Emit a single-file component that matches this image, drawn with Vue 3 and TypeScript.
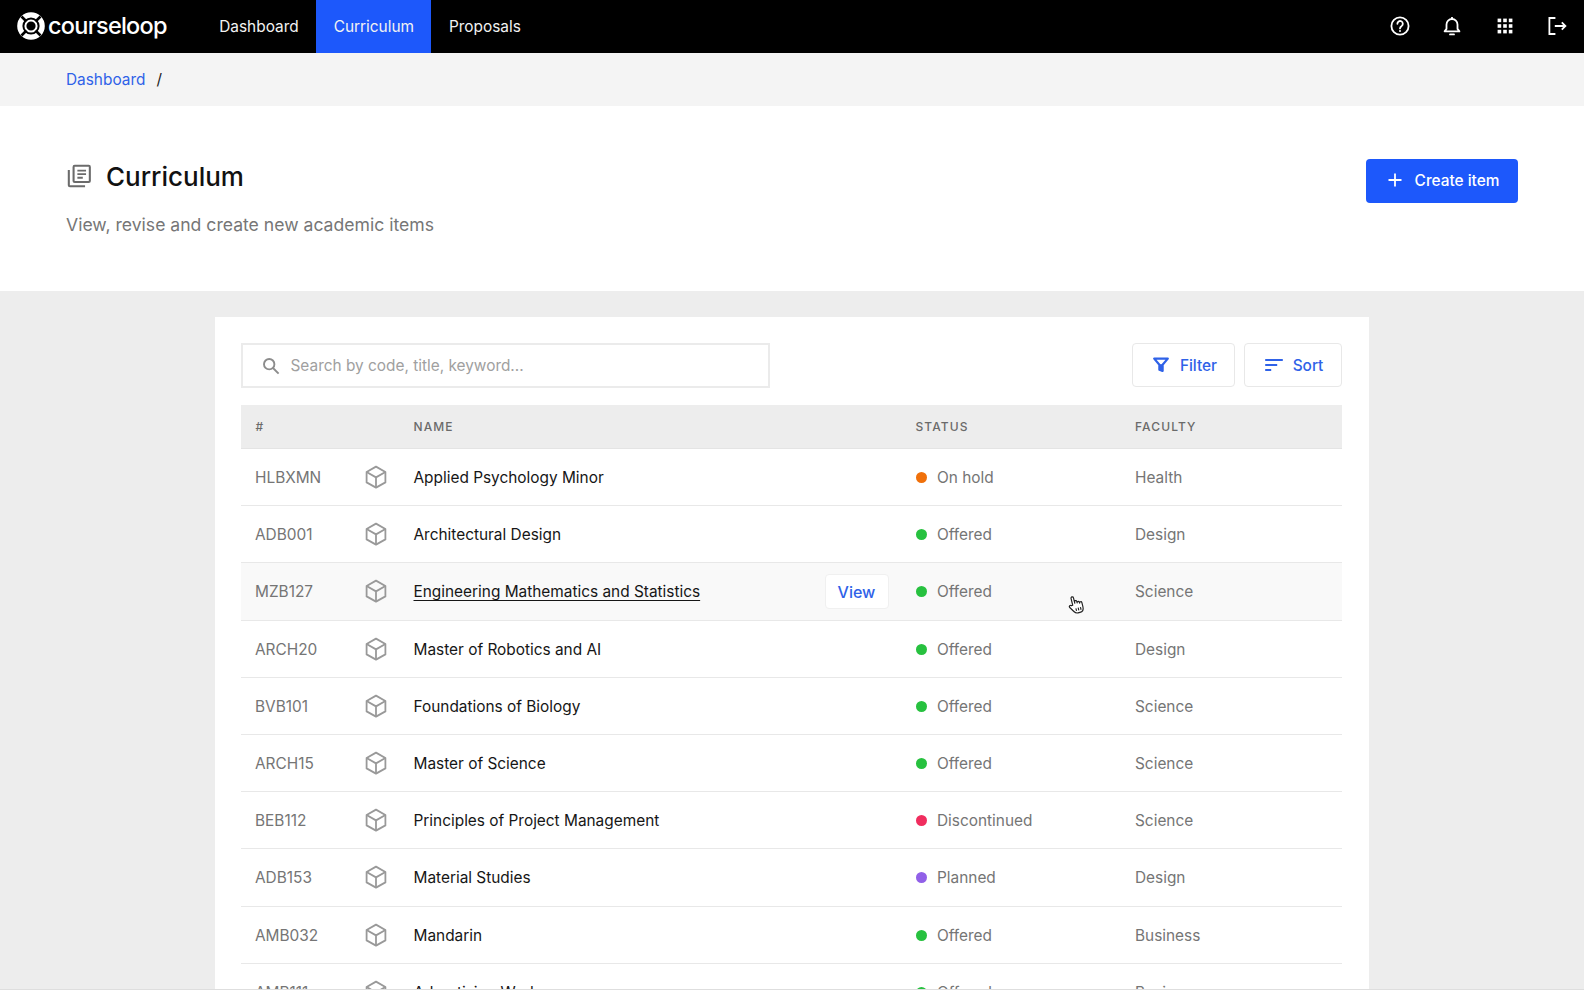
<script setup lang="ts">
interface Row { code: string; name: string; status: string; faculty: string; color: string }
const green = '#27c13f'
const rows: Row[] = [
  { code: 'HLBXMN', name: 'Applied Psychology Minor', status: 'On hold', faculty: 'Health', color: '#f0700a' },
  { code: 'ADB001', name: 'Architectural Design', status: 'Offered', faculty: 'Design', color: green },
  { code: 'MZB127', name: 'Engineering Mathematics and Statistics', status: 'Offered', faculty: 'Science', color: green },
  { code: 'ARCH20', name: 'Master of Robotics and AI', status: 'Offered', faculty: 'Design', color: green },
  { code: 'BVB101', name: 'Foundations of Biology', status: 'Offered', faculty: 'Science', color: green },
  { code: 'ARCH15', name: 'Master of Science', status: 'Offered', faculty: 'Science', color: green },
  { code: 'BEB112', name: 'Principles of Project Management', status: 'Discontinued', faculty: 'Science', color: '#f02d5e' },
  { code: 'ADB153', name: 'Material Studies', status: 'Planned', faculty: 'Design', color: '#9160e8' },
  { code: 'AMB032', name: 'Mandarin', status: 'Offered', faculty: 'Business', color: green },
  { code: 'AMB111', name: 'Advertising Works', status: 'Offered', faculty: 'Business', color: green },
]
const nav = ['Dashboard', 'Curriculum', 'Proposals']
</script>

<template>
  <div class="page">
    <header class="topbar">
      <div class="brand">
        <svg class="logo" viewBox="0 0 28 28" width="28" height="28">
          <circle cx="14" cy="14" r="11.2" fill="none" stroke="#fff" stroke-width="5.2" />
          <circle cx="14" cy="14" r="5.6" fill="none" stroke="#fff" stroke-width="2" />
          <path d="M4.5 4.5l5 5M23.5 4.5l-5 5M4.5 23.5l5-5M23.5 23.5l-5-5" stroke="#000" stroke-width="2.6" />
        </svg>
        <span class="wordmark">courseloop</span>
      </div>
      <nav class="nav">
        <a v-for="n in nav" :key="n" class="nav-item" :class="{ active: n === 'Curriculum' }">{{ n }}</a>
      </nav>
      <div class="top-icons">
        <svg viewBox="0 0 24 24" width="24" height="24" fill="none" stroke="#fff" stroke-width="1.8">
          <circle cx="12" cy="12" r="8.6" />
          <path d="M9.4 9.8a2.7 2.7 0 1 1 4.3 2.1c-1 .7-1.7 1.2-1.7 2.5" stroke-linecap="round" />
          <circle cx="12" cy="16.9" r="1" fill="#fff" stroke="none" />
        </svg>
        <svg viewBox="0 0 24 24" width="24" height="24" fill="none" stroke="#fff" stroke-width="1.8">
          <path d="M4.6 17.4h14.8l-1.9-2.5v-4.4a5.5 5.5 0 0 0-11 0v4.4z" stroke-linejoin="round" />
          <path d="M12 3v2" />
          <path d="M10 20.4h4" stroke-linecap="round" />
        </svg>
        <svg viewBox="0 0 24 24" width="24" height="24" fill="#fff">
          <rect v-for="p in 9" :key="p" :x="4.6 + ((p - 1) % 3) * 5.6" :y="4.6 + Math.floor((p - 1) / 3) * 5.6" width="3.6" height="3.6" />
        </svg>
        <svg viewBox="0 0 24 24" width="24" height="24" fill="none" stroke="#fff" stroke-width="1.8">
          <path d="M10.4 4H4.4v16h6" />
          <path d="M9.8 12h10.6M16.8 8.4l3.6 3.6-3.6 3.6" />
        </svg>
      </div>
    </header>

    <div class="crumbs">
      <a class="crumb-link">Dashboard</a>
      <span class="crumb-sep">/</span>
    </div>

    <section class="hero">
      <div>
        <div class="title-row">
          <svg viewBox="0 0 24 24" width="26" height="26" fill="none" stroke="#6b6b6b" stroke-width="1.9">
            <rect x="7" y="2.6" width="15" height="15" rx="1" />
            <path d="M2.6 6.5v14a1 1 0 0 0 1 1h14" />
            <path d="M10.5 7h8M10.5 10.3h8M10.5 13.6h5" stroke-width="1.7" />
          </svg>
          <h1>Curriculum</h1>
        </div>
        <p class="sub">View, revise and create new academic items</p>
      </div>
      <button class="create">
        <svg viewBox="0 0 16 16" width="16" height="16" fill="none" stroke="#fff" stroke-width="1.8">
          <path d="M8 1.5v13M1.5 8h13" />
        </svg>
        Create item
      </button>
    </section>

    <main class="main">
      <div class="card">
        <div class="tools">
          <div class="search">
            <svg viewBox="0 0 20 20" width="20" height="20" fill="none" stroke="#8c8c8c" stroke-width="1.9">
              <circle cx="8.2" cy="8.2" r="5.2" />
              <path d="m12 12 5.6 5.6" />
            </svg>
            <span>Search by code, title, keyword...</span>
          </div>
          <div class="tool-btns">
            <button class="tool filter">
              <svg viewBox="0 0 20 20" width="20" height="20" fill="none" stroke="#2f62e8" stroke-width="2.2" stroke-linejoin="round">
                <path d="M3.2 3.6h13.6l-5.2 6.2v6.2l-3.2-1.2v-5z" />
                <path d="M8.4 9.8h3.2v6.2l-3.2-1.2z" fill="#2f62e8" stroke-width="1" />
              </svg>
              Filter
            </button>
            <button class="tool sort">
              <svg viewBox="0 0 20 20" width="20" height="20" fill="none" stroke="#2f62e8" stroke-width="1.8">
                <path d="M1.2 5h17.6M1.2 10h12M1.2 15h6" />
              </svg>
              Sort
            </button>
          </div>
        </div>

        <div class="thead">
          <span>#</span>
          <span>NAME</span>
          <span>STATUS</span>
          <span>FACULTY</span>
        </div>

        <div v-for="r in rows" :key="r.code" class="row" :class="{ hover: r.code === 'MZB127' }">
          <div class="code-cell">
            <span class="code">{{ r.code }}</span>
            <svg class="cube" viewBox="0 0 24 24" width="24" height="24" fill="none" stroke="#999" stroke-width="1.8" stroke-linejoin="round">
              <path d="M12 1.6 21.4 7v10.4L12 22.6l-9.4-5.2V7z" />
              <path d="M2.6 7l9.4 5.4L21.4 7M12 12.4v10.2" />
            </svg>
          </div>
          <div class="name-cell">
            <span class="name">{{ r.name }}</span>
            <a v-if="r.code === 'MZB127'" class="view">View</a>
          </div>
          <div class="status-cell">
            <i class="dot" :style="{ background: r.color }"></i>
            {{ r.status }}
          </div>
          <div class="faculty-cell">{{ r.faculty }}</div>
        </div>
      </div>
    </main>

    <svg class="cursor" viewBox="0 0 20 24" width="18" height="22" fill="#fff" stroke="#222" stroke-width="1.3" stroke-linejoin="round">
      <path d="M6.4 11.4V3.6a1.4 1.4 0 0 1 2.8 0v6.2V8.4a1.3 1.3 0 0 1 2.6 0v1.6a1.3 1.3 0 0 1 2.6 0v1a1.3 1.3 0 0 1 2.6 0v4.8c0 3-1.6 5.2-4.8 5.2H10c-2 0-3-1-4-2.6L2.6 13c-1-1.6 1-2.8 2.2-1.4z" />
      <path d="M9 15.5v3M11.6 15.5v3M14.2 15.5v3" fill="none" />
    </svg>
    <div class="edge"></div>
  </div>
</template>

<style>
html, body { margin: 0; background: #ededed; overflow: hidden; }
</style>

<style scoped>
.page {
  position: relative;
  width: 1584px;
  height: 990px;
  overflow: hidden;
  font-family: Inter, "Liberation Sans", sans-serif;
  background: #ededed;
  color: #111;
}
.topbar {
  height: 53px;
  background: #000;
  display: flex;
  align-items: stretch;
  box-sizing: border-box;
}
.brand {
  display: flex;
  align-items: center;
  width: 201.75px;
  padding: 0 0 1px 17px;
  box-sizing: border-box;
  gap: 3px;
}
.logo { flex: none; }
.wordmark {
  color: #fff;
  font-family: Inter, sans-serif;
  font-size: 23.5px;
  font-weight: 500;
  letter-spacing: -0.75px;
  line-height: 28px;
  position: relative;
  top: -0.5px;
}
.nav { display: flex; }
.nav-item {
  display: flex;
  align-items: center;
  padding: 0 17.5px 1px;
  color: #f2f2f2;
  font-size: 15.4px;
}
.nav-item.active { background: #1d58fb; }
.top-icons {
  margin-left: auto;
  display: flex;
  align-items: center;
  gap: 28.5px;
  padding: 0 15px 1px 0;
}
.crumbs {
  height: 53px;
  background: #f4f4f4;
  display: flex;
  align-items: center;
  padding: 0 0 1px 66px;
  box-sizing: border-box;
  font-size: 15.4px;
  gap: 11px;
}
.crumb-link { color: #2f62e8; }
.crumb-sep { color: #222; }
.hero {
  height: 185px;
  background: #fff;
  display: flex;
  justify-content: space-between;
  align-items: flex-start;
  padding: 52px 66px 0;
  box-sizing: border-box;
}
.title-row {
  display: flex;
  align-items: center;
  gap: 14px;
  height: 36px;
}
h1 {
  margin: 0;
  font-size: 26px;
  font-weight: 500;
  color: #111;
}
.sub {
  margin: 19px 0 0;
  font-size: 17.6px;
  line-height: 24px;
  color: #767676;
}
.create {
  width: 152px;
  height: 44px;
  margin-top: 0.5px;
  background: #1d58fb;
  color: #fff;
  border: 0;
  border-radius: 4px;
  display: flex;
  align-items: center;
  justify-content: center;
  gap: 12px;
  padding: 0 0 1px 2px;
  font: 500 15.4px Inter, sans-serif;
}
.main { padding: 26px 0 0 215px; }
.card {
  width: 1154px;
  height: 700px;
  background: #fff;
  padding: 26px 27.5px 0 26px;
  box-sizing: border-box;
}
.tools {
  display: flex;
  justify-content: space-between;
  align-items: flex-start;
  height: 45px;
}
.search {
  width: 529px;
  height: 45px;
  box-sizing: border-box;
  border: 2px solid #ebebeb;
  display: flex;
  align-items: center;
  gap: 10px;
  padding: 0 0 0 17.5px;
  font-size: 15.4px;
  color: #a0a0a0;
}
.tool-btns { display: flex; gap: 9px; }
.tool {
  height: 44px;
  background: #fff;
  border: 1px solid #e8e8e8;
  border-radius: 4px;
  color: #2f62e8;
  display: flex;
  align-items: center;
  justify-content: center;
  gap: 9px;
  padding: 0;
  font: 500 15.4px Inter, sans-serif;
}
.filter { width: 103px; padding-left: 2px; }
.sort { width: 98px; padding-left: 2px; }
.thead, .row {
  display: grid;
  grid-template-columns: 172.5px 502px 219.5px 1fr;
}
.thead {
  margin-top: 17px;
  height: 44px;
  align-items: center;
  background: #ededed;
  border-bottom: 1px solid #e4e4e4;
  font-size: 12px;
  font-weight: 500;
  letter-spacing: 1.1px;
  color: #6a6a6a;
  box-sizing: border-box;
}
.thead span:first-child { padding-left: 14.5px; }
.row {
  height: 57.2px;
  box-sizing: border-box;
  border-bottom: 1px solid #e8e8e8;
  align-items: center;
  padding-top: 1px;
  font-size: 15.4px;
}
.row.hover { background: #f9f9f9; }
.code-cell { display: flex; align-items: center; padding-left: 14px; }
.code { width: 110px; color: #757575; }
.cube { flex: none; position: relative; left: -1px; top: -0.5px; }
.name-cell {
  display: flex;
  align-items: center;
  justify-content: space-between;
  padding-right: 27px;
}
.name { color: #161616; }
.hover .name { text-decoration: underline; text-underline-offset: 3px; }
.view {
  width: 64px;
  height: 35px;
  background: #fff;
  border: 1px solid #f0f0f0;
  border-radius: 4px;
  color: #2f62e8;
  font-size: 16px;
  font-weight: 500;
  display: flex;
  align-items: center;
  justify-content: center;
  box-sizing: border-box;
}
.status-cell { display: flex; align-items: center; gap: 10.5px; color: #757575; }
.dot { width: 11px; height: 11px; border-radius: 50%; flex: none; }
.faculty-cell { color: #757575; }
.cursor { position: absolute; left: 1067px; top: 594px; transform: rotate(-14deg); }
.edge {
  position: absolute;
  left: 0;
  right: 0;
  bottom: 0;
  height: 1.5px;
  background: #dedede;
}
</style>
